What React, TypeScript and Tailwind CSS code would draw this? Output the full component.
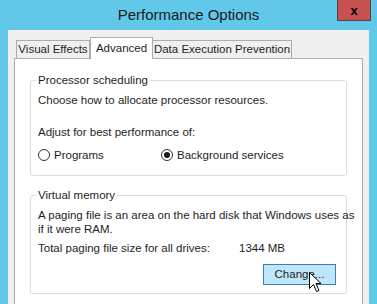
const font = { fontFamily: '"Liberation Sans", Arial, sans-serif' };

function Radio({ checked, label }: { checked?: boolean; label: string }) {
  return (
    <div className="flex items-center gap-[4px]">
      <span className="flex h-[12px] w-[12px] items-center justify-center rounded-full border border-[#333] bg-white">
        {checked ? <span className="h-[6px] w-[6px] rounded-full bg-[#1a1a1a]" /> : null}
      </span>
      <span>{label}</span>
    </div>
  );
}

function Group({ title, className, children }: { title: string; className?: string; children: React.ReactNode }) {
  return (
    <div className={`relative rounded-[3px] border border-[#dcdcdc] ${className ?? ""}`}>
      <span className="absolute left-[5px] top-[-9px] bg-white px-[2px] leading-[16px]">{title}</span>
      {children}
    </div>
  );
}

function Cursor() {
  return (
    <svg
      className="pointer-events-none absolute left-[309px] top-[272px]"
      width="13"
      height="21"
      viewBox="0 0 13 21"
    >
      <path
        d="M0.5 0.5 L0.5 16.5 L4.5 12.5 L7.5 19.5 L10 18.5 L7 11.5 L12 11.5 Z"
        fill="white"
        stroke="black"
        strokeWidth="1"
        strokeLinejoin="miter"
      />
    </svg>
  );
}

export default function App() {
  return (
    <div className="relative h-[304px] w-[377px] overflow-hidden whitespace-nowrap bg-[#62c8ea] text-[11.5px] text-[#1e1e1e]" style={font}>
      <div className="flex h-[30px] items-center justify-center pt-[1px] text-[15px] text-[#1a1a1a]">
        Performance Options
      </div>
      <div className="absolute left-[337px] top-0 flex h-[21px] w-[34px] items-center justify-center border border-t-0 border-[#4a4a4a] bg-[#c75050]">
        <span className="text-[13px] font-bold leading-none text-black">x</span>
      </div>

      <div className="ml-[8px] h-[274px] w-[361px] bg-[#f0f0f0] pl-[6px] pt-[8px]">
        <div className="flex h-[20px] items-end pl-[2px]">
          <div className="flex h-[18px] w-[74px] items-center justify-center border border-b-0 border-[#acacac] bg-[#f0f0f0]">
            Visual Effects
          </div>
          <div className="relative z-10 mb-[-1px] flex h-[22px] w-[63px] items-start justify-center border border-b-0 border-[#acacac] bg-white pt-[2px]">
            Advanced
          </div>
          <div className="flex h-[18px] w-[139px] items-center justify-center border border-b-0 border-l-0 border-[#acacac] bg-[#f0f0f0]">
            Data Execution Prevention
          </div>
        </div>
        <div className="h-[260px] w-[349px] border border-b-0 border-[#acacac] bg-white px-[15px] pt-[21px]">
          <Group title="Processor scheduling" className="h-[96px] px-[7px] pt-[11px]">
            <div className="leading-[16px]">Choose how to allocate processor resources.</div>
            <div className="mt-[16px] leading-[16px]">Adjust for best performance of:</div>
            <div className="mt-[7px] flex leading-[16px]">
              <div className="w-[123px]">
                <Radio label="Programs" />
              </div>
              <Radio checked label="Background services" />
            </div>
          </Group>
          <Group title="Virtual memory" className="mt-[19px] h-[99px] px-[7px] pt-[12px]">
            <div className="leading-[14px]">
              A paging file is an area on the hard disk that Windows uses as
              <br />
              if it were RAM.
            </div>
            <div className="mt-[4px] flex leading-[16px]">
              <span className="w-[201px]">Total paging file size for all drives:</span>
              <span>1344 MB</span>
            </div>
            <div className="mt-[8px] flex justify-end pr-[3px]">
              <button className="h-[21px] w-[73px] border border-[#3c7fb1] bg-[#bee6fd] text-[11.5px] text-[#1e1e1e]">
                Change...
              </button>
            </div>
          </Group>
        </div>
      </div>
      <Cursor />
    </div>
  );
}
